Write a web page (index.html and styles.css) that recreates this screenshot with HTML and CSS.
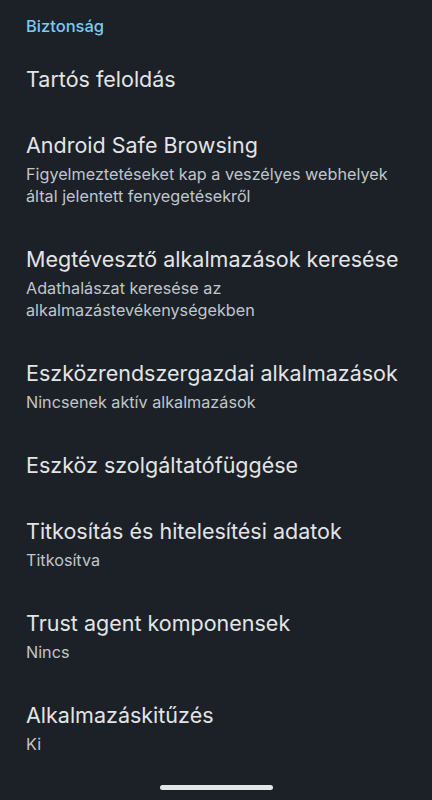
FILE: index.html
```html
<!DOCTYPE html>
<html lang="hu">
<head>
<meta charset="utf-8">
<link rel="stylesheet" href="styles.css">
</head>
<body>
<div class="screen">
  <div class="section-header">Biztonság</div>
  <div class="list">
    <div class="row"><div class="title">Tartós feloldás</div></div>
    <div class="row"><div class="title">Android Safe Browsing</div><div class="sub">Figyelmeztetéseket kap a veszélyes webhelyek által jelentett fenyegetésekről</div></div>
    <div class="row"><div class="title">Megtévesztő alkalmazások keresése</div><div class="sub">Adathalászat keresése az alkalmazástevékenységekben</div></div>
    <div class="row"><div class="title">Eszközrendszergazdai alkalmazások</div><div class="sub">Nincsenek aktív alkalmazások</div></div>
    <div class="row"><div class="title">Eszköz szolgáltatófüggése</div></div>
    <div class="row"><div class="title">Titkosítás és hitelesítési adatok</div><div class="sub">Titkosítva</div></div>
    <div class="row"><div class="title">Trust agent komponensek</div><div class="sub">Nincs</div></div>
    <div class="row"><div class="title">Alkalmazáskitűzés</div><div class="sub">Ki</div></div>
  </div>
  <div class="nav"><div class="handle"></div></div>
</div>
</body>
</html>
```
FILE: styles.css
```css
html, body {
  margin: 0;
  padding: 0;
  background: #1b2127;
}
.screen {
  width: 432px;
  height: 800px;
  background: #1b2127;
  font-family: Inter, Roboto, sans-serif;
  display: flex;
  flex-direction: column;
  overflow: hidden;
  position: relative;
}
.section-header {
  padding: 14px 26px 8px;
  line-height: 24px;
  font-size: 16.5px;
  font-weight: 500;
  color: #7ccaf2;
}
.list {
  display: flex;
  flex-direction: column;
}
.row {
  padding: 19px 26px;
}
.title {
  font-size: 21.5px;
  line-height: 28px;
  color: #e2e4e6;
  white-space: nowrap;
}
.sub {
  margin-top: 4px;
  font-size: 16.2px;
  line-height: 22px;
  color: #c0c6cc;
  max-width: 380px;
}
.nav {
  position: absolute;
  left: 0;
  right: 0;
  bottom: 0;
  height: 26px;
  display: flex;
  justify-content: center;
}
.handle {
  width: 113px;
  height: 5px;
  border-radius: 3px;
  background: #e3e5e7;
  margin-top: 11px;
}
```
